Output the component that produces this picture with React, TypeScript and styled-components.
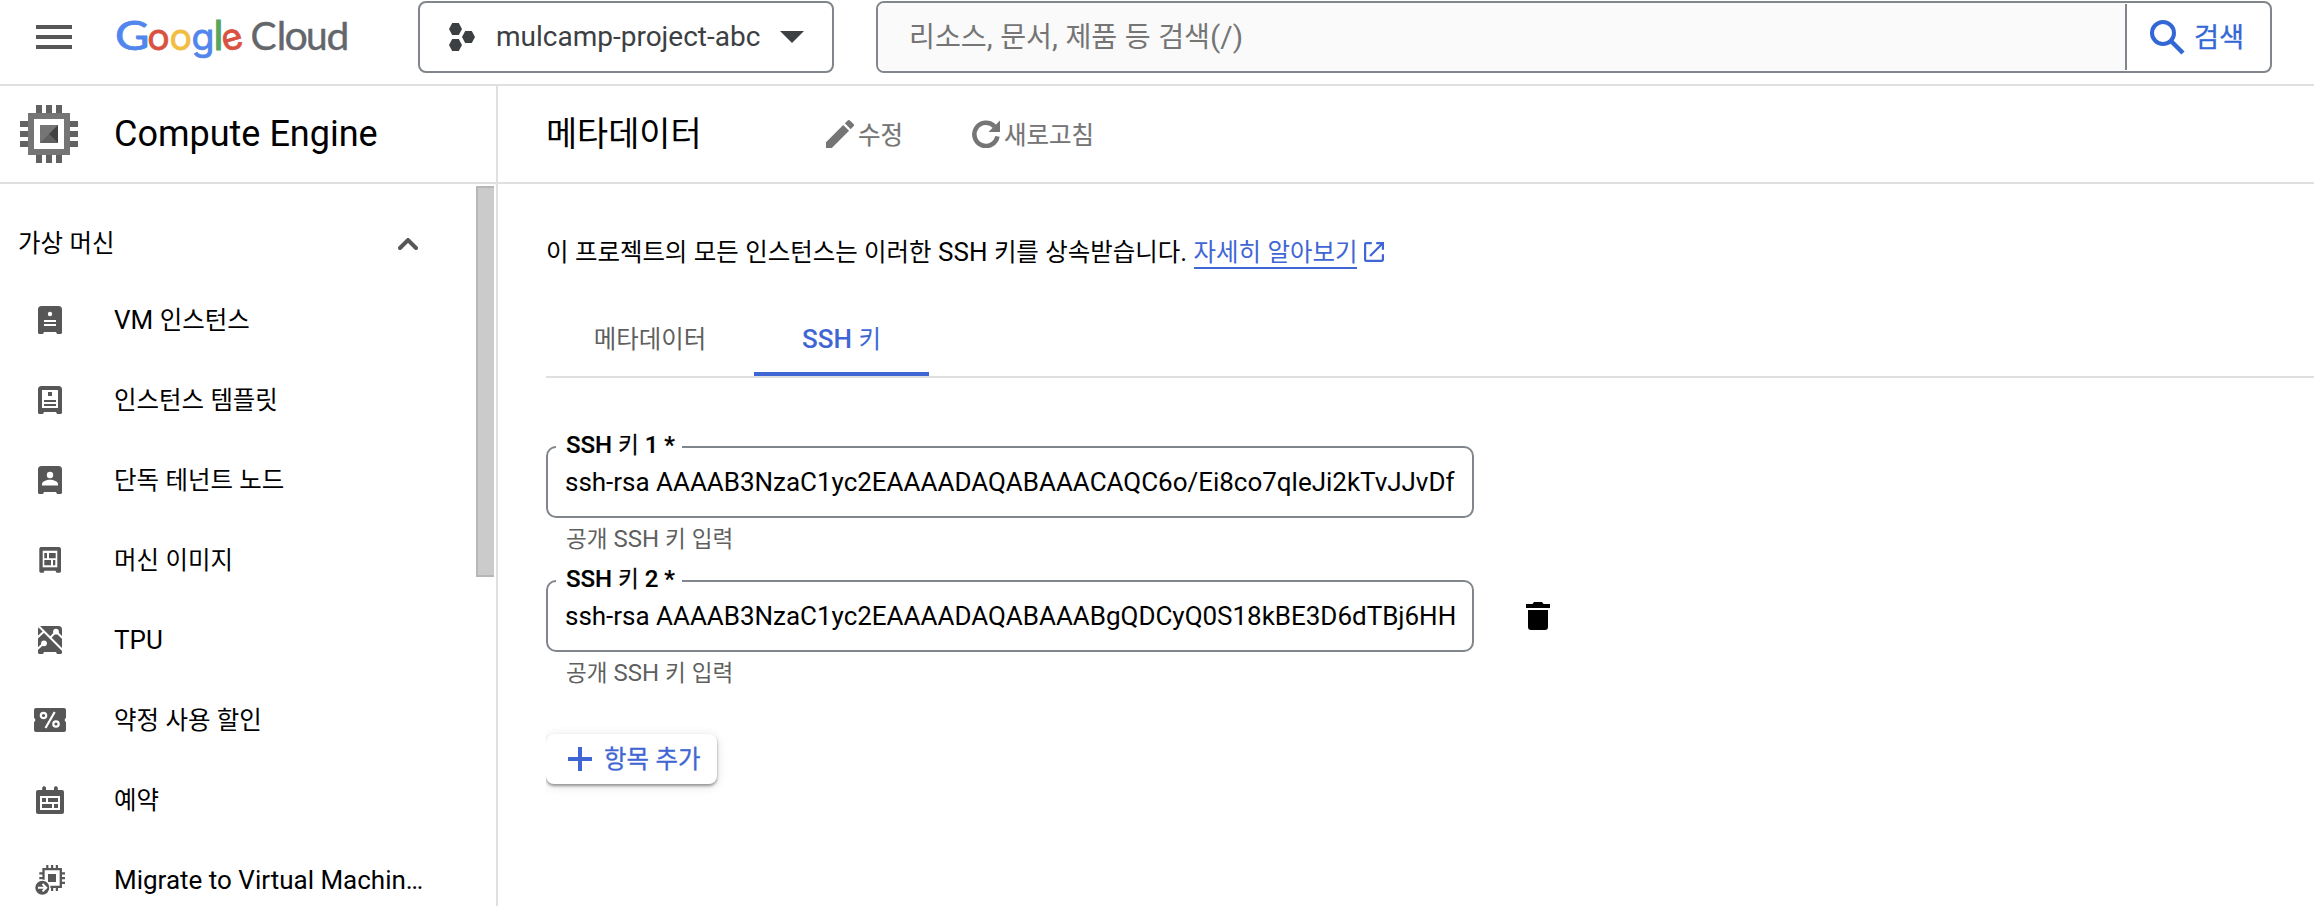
import React from 'react';
import styled, { createGlobalStyle } from 'styled-components';

const GlobalStyle = createGlobalStyle`
  * { box-sizing: border-box; }
  html, body { margin: 0; padding: 0; background: #fff; }
  body {
    font-family: Roboto, 'Noto Sans CJK KR', sans-serif;
    font-size: 26px;
    color: #000;
    overflow: hidden;
  }
  svg { display: block; flex: none; }
`;

/* Hangul is set slightly smaller than Latin so both scripts look even. */
const Hangul = styled.span`
  font-size: 0.94em;
  font-weight: 400;
`;

const Mixed = ({ children }: { children: string }) => (
  <>
    {children.split(/([\uac00-\ud7a3]+)/).map((part, i) =>
      i % 2 ? <Hangul key={i}>{part}</Hangul> : part,
    )}
  </>
);

const Page = styled.div`
  width: 2314px;
  height: 906px;
  display: flex;
  flex-direction: column;
  overflow: hidden;
`;

const TopBar = styled.header`
  height: 86px;
  flex: none;
  display: flex;
  align-items: flex-start;
  padding: 1px 42px 0 36px;
  border-bottom: 2px solid #e0e0e0;
`;

const MenuButton = styled.div`
  height: 72px;
  width: 36px;
  display: flex;
  align-items: center;
`;

const LogoBox = styled.div`
  margin-left: 40px;
  width: 240px;
  height: 72px;
`;

const ProjectPicker = styled.div`
  margin-left: 66px;
  width: 416px;
  height: 72px;
  display: flex;
  align-items: center;
  border: 2px solid #80868b;
  border-radius: 8px;
  padding: 0 28px 0 29px;
  color: #3c4043;
  font-size: 28px;
  line-height: 40px;
`;

const ProjectName = styled.span`
  margin-left: 21px;
  flex: 1;
  white-space: nowrap;
`;

const SearchBox = styled.div`
  margin-left: 42px;
  flex: 1;
  height: 72px;
  display: flex;
  align-items: center;
  border: 2px solid #80868b;
  border-radius: 8px;
  font-size: 30px;
  line-height: 40px;
  overflow: hidden;
`;

const SearchInput = styled.div`
  flex: 1;
  height: 68px;
  display: flex;
  align-items: center;
  white-space: pre;
  background: #fafafa;
  padding-left: 31px;
  color: #757575;
`;

const SearchButton = styled.div`
  width: 145px;
  height: 66px;
  display: flex;
  align-items: center;
  border-left: 2px solid #80868b;
  padding-left: 22px;
  gap: 9px;
  color: #3367d6;
  font-size: 29px;
  -webkit-text-stroke: 0.3px;
`;

const Body = styled.div`
  flex: 1;
  display: flex;
  min-height: 0;
`;

const Sidebar = styled.nav`
  width: 498px;
  flex: none;
  display: flex;
  flex-direction: column;
  border-right: 2px solid #e0e0e0;
`;

const ProductHeader = styled.div`
  height: 98px;
  flex: none;
  display: flex;
  align-items: center;
  gap: 36px;
  padding-left: 20px;
  border-bottom: 2px solid #e0e0e0;
  font-size: 36px;
  line-height: 44px;
`;

const NavScroller = styled.div`
  flex: 1;
  display: flex;
  justify-content: space-between;
  overflow: hidden;
`;

const NavList = styled.div`
  width: 440px;
  padding-top: 18px;
`;

const ScrollThumb = styled.div`
  width: 18px;
  height: 391px;
  margin: 2px 2px 0 0;
  background: #cbcbcb;
  border: solid #b7b7b7;
  border-width: 2px 0 2px 2px;
`;

const NavSection = styled.div`
  height: 78px;
  display: flex;
  align-items: center;
  justify-content: space-between;
  padding: 5px 22px 0 18px;
  line-height: 36px;
`;

const NavItem = styled.div`
  height: 80px;
  display: flex;
  align-items: center;
  gap: 46px;
  padding-left: 32px;
  line-height: 36px;
  white-space: nowrap;
`;

const Main = styled.main`
  flex: 1;
  min-width: 0;
`;

const PageHeader = styled.div`
  height: 98px;
  display: flex;
  align-items: center;
  padding-left: 48px;
  border-bottom: 2px solid #e0e0e0;
`;

const PageTitle = styled.h1`
  margin: 0;
  width: 280px;
  font-size: 36px;
  font-weight: 400;
  line-height: 48px;
`;

const Action = styled.div<{ $gap: number }>`
  display: flex;
  align-items: center;
  gap: 4px;
  margin-right: ${(p) => p.$gap}px;
  color: #757575;
  line-height: 36px;
  -webkit-text-stroke: 0.2px;
`;

const ActionText = styled.span`
  padding-top: 2px;
`;

const Content = styled.div`
  padding: 48px 0 0 48px;
`;

const Intro = styled.p`
  margin: 0;
  height: 40px;
  display: flex;
  line-height: 40px;
  white-space: pre;
`;

const LearnMore = styled.a`
  height: 37px;
  color: #3f66d4;
  border-bottom: 2px solid #3f66d4;
  margin-right: 7px;
`;

const Tabs = styled.div`
  height: 88px;
  margin-top: 18px;
  padding-top: 26px;
  display: flex;
  border-bottom: 2px solid #e0e0e0;
`;

const Tab = styled.div<{ $active?: boolean; $width: number }>`
  width: ${(p) => p.$width}px;
  display: flex;
  justify-content: center;
  line-height: 46px;
  color: ${(p) => (p.$active ? '#3f66d4' : '#5f5f5f')};
  font-weight: 500;
  border-bottom: 4px solid ${(p) => (p.$active ? '#3f66d4' : 'transparent')};
`;

const KeyList = styled.div`
  padding-top: 68px;
`;

const KeyRow = styled.div`
  height: 134px;
  display: flex;
`;

const KeyField = styled.div`
  width: 928px;
`;

const FieldBox = styled.div`
  position: relative;
  height: 72px;
  border: 2px solid #80868b;
  border-radius: 10px;
  padding: 16px 16px 0 17px;
  line-height: 36px;
  letter-spacing: -0.02px;
  white-space: nowrap;
`;

const FieldLabel = styled.span`
  position: absolute;
  left: 8px;
  top: -21px;
  padding: 0 7px 0 10px;
  background: #fff;
  font-size: 24px;
  font-weight: 500;
  line-height: 36px;
  -webkit-text-stroke: 0.2px;
`;

const Hint = styled.div`
  padding-left: 20px;
  margin-top: 3px;
  font-size: 24px;
  line-height: 36px;
  color: #5f5f5f;
`;

const DeleteButton = styled.div`
  margin: 22px 0 0 52px;
`;

const AddButton = styled.div`
  margin-top: 20px;
  width: 171px;
  height: 50px;
  display: flex;
  align-items: center;
  gap: 12px;
  padding-left: 22px;
  border-radius: 8px;
  line-height: 36px;
  color: #3f66d4;
  background: #fff;
  box-shadow: 0 2px 3px rgba(0, 0, 0, 0.38), 0 2px 12px rgba(0, 0, 0, 0.12);
  clip-path: inset(-16px -20px -20px 0);
  white-space: nowrap;
  -webkit-text-stroke: 0.3px;
`;

const INK = '#575757';

const Letter = ({ ch, x, sx = 1, size = 40, fill, weight, font = 'Lato', tilt = 0 }: {
  ch: string; x: number; sx?: number; size?: number; fill: string; weight: number; font?: string; tilt?: number;
}) => (
  <text
    transform={`translate(${x} 48.600) scale(${sx} 1) rotate(${tilt} 10.500 -10)`}
    fontFamily={`${font}, sans-serif`}
    fontSize={size}
    fill={fill}
    stroke={fill}
    strokeWidth={weight}
  >
    {ch}
  </text>
);

const Logo = () => (
  <svg width="240" height="72" viewBox="0 0 240 72">
    <Letter ch="G" x={3} sx={1.15} size={41} fill="#5186ec" weight={0.8} />
    <Letter ch="o" x={35.200} sx={1.040} size={36} font="Inter" fill="#d95140" weight={0.8} />
    <Letter ch="o" x={57.400} sx={1.040} size={36} font="Inter" fill="#f2bd42" weight={0.8} />
    <Letter ch="g" x={79.600} sx={1.040} size={36} font="Inter" fill="#5186ec" weight={0.8} />
    <Letter ch="l" x={101.8} fill="#58a55c" weight={1.2} />
    <Letter ch="e" x={109.500} size={36} font="Inter" tilt={-16} fill="#d95140" weight={0.8} />
    <Letter ch="C" x={138.5} size={39} fill="#63666a" weight={0.4} />
    <Letter ch="l" x={165} size={38} fill="#63666a" weight={0.6} />
    <Letter ch="o" x={172.5} sx={1.030} fill="#63666a" weight={0.4} />
    <Letter ch="u" x={194} sx={0.97} fill="#63666a" weight={0.4} />
    <Letter ch="d" x={214.500} sx={1.060} size={38.5} fill="#63666a" weight={0.4} />
  </svg>
);

const MenuIcon = () => (
  <svg width="36" height="24" viewBox="0 0 36 24" fill={INK}>
    <path d="M0 0h36v4H0zM0 10h36v4H0zM0 20h36v4H0z" />
  </svg>
);

const ProjectIcon = () => (
  <svg width="26" height="28" viewBox="0 0 26 28" fill="#3c4043">
    <path d="M3.2 0h6.6L13 6l-3.200 6H3.200L0 6zM16.200 8h6.600L26 14l-3.200 6h-6.600L13 14zM3.200 16h6.600L13 22l-3.200 6H3.200L0 22z" />
  </svg>
);

const CaretIcon = () => (
  <svg width="24" height="12" viewBox="0 0 24 12" fill="#3c4043">
    <path d="M0 0h24L12 12z" />
  </svg>
);

const SearchIcon = () => (
  <svg width="36" height="36" viewBox="0 0 36 36" fill="none" stroke="#3367d6" strokeWidth="4">
    <circle cx="14" cy="14" r="11" />
    <path d="M21.500 21.500L34 34" strokeWidth="4.500" />
  </svg>
);

const ComputeIcon = () => (
  <svg width="58" height="58" viewBox="0 0 58 58">
    <path
      fill="#626262"
      d="M16 0h6v8h-6zM26 0h6v8h-6zM36 0h6v8h-6zM16 50h6v8h-6zM26 50h6v8h-6zM36 50h6v8h-6zM0 16h8v6H0zM0 26h8v6H0zM0 36h8v6H0zM50 16h8v6h-8zM50 26h8v6h-8zM50 36h8v6h-8z"
    />
    <path fill="#757575" fillRule="evenodd" d="M8 8h42v42H8zM14 14v30h30V14z" />
    <path fill="#757575" d="M20 20h18v18H20z" />
    <path fill="#616161" d="M20 38l9-9 9 9z" />
    <path fill="#424242" d="M38 20v18l-9-9z" />
  </svg>
);

const EditIcon = () => (
  <svg width="28" height="28" viewBox="3 3 18 18" fill="#757575">
    <path d="M3 17.250V21h3.750L17.810 9.940l-3.750-3.750L3 17.250zM20.710 7.040c.39-.39.39-1.020 0-1.410l-2.340-2.340c-.39-.39-1.020-.39-1.410 0l-1.830 1.830 3.750 3.750 1.830-1.830z" />
  </svg>
);

const RefreshIcon = () => (
  <svg width="28" height="28" viewBox="0 0 28 28">
    <path d="M22.500 6.500A11.600 11.600 0 1 0 25.400 16.300" fill="none" stroke="#757575" strokeWidth="4.600" />
    <path d="M28 .5V12H16.500z" fill="#757575" />
  </svg>
);

const ChevronIcon = () => (
  <svg width="20" height="12" viewBox="0 0 20 12" fill="none" stroke={INK} strokeWidth="4" strokeLinecap="round">
    <path d="M2 10l8-8 8 8" />
  </svg>
);

const NavSvg = ({ children }: { children: React.ReactNode }) => (
  <svg width="36" height="36" viewBox="0 0 36 36" fill={INK}>{children}</svg>
);

const CABINET = 'M9.500 4h17A3.500 3.500 0 0 1 30 7.500V31l-1 1h-4l-1-2H12l-1 2H7l-1-1V7.500A3.500 3.500 0 0 1 9.500 4z';

const VmIcon = () => (
  <NavSvg>
    <path d={CABINET} />
    <g fill="#fff">
      <circle cx="18" cy="12" r="2.200" />
      <path d="M12 18h12v2H12zM12 22h12v2H12z" />
    </g>
  </NavSvg>
);

const TemplateIcon = () => (
  <NavSvg>
    <path d={CABINET} />
    <path fill="#fff" d="M10 8h16v18H10z" />
    <path d="M16 10h4v4h-4zM12 18h12v2H12zM12 22h12v2H12z" />
  </NavSvg>
);

const TenantIcon = () => (
  <NavSvg>
    <path d={CABINET} />
    <g fill="#fff">
      <circle cx="18" cy="13" r="3.200" />
      <path d="M10 23.500v-1.500c0-2.500 4.500-4.300 8-4.300s8 1.800 8 4.300v1.500z" />
    </g>
  </NavSvg>
);

const ImageIcon = () => (
  <NavSvg>
    <path d="M8.500 5h19l1.500 1.500v23l-1 1.200h-3.500l-1-2h-11l-1 2H8.300L7.300 29.500v-23z" />
    <path fill="#fff" d="M10.700 8.700h14.600v16.600H10.700z" />
    <path d="M12.300 11H15v5.200h-2.700zM17 11h6.700v5.200H17zM12.300 18H19v5.300h-6.700zM21 18h2.300v5.300H21z" />
  </NavSvg>
);

const TpuIcon = () => (
  <NavSvg>
    <path d={CABINET} />
    <g stroke="#fff" strokeWidth="2" fill="none">
      <path d="M7 4.500L31 28.500M5.500 15.500L12.500 9M31 16.500L24 9.500 18.500 15.500M5.500 27L12 21" />
    </g>
    <g fill="#fff">
      <circle cx="24" cy="9.700" r="2.900" />
      <circle cx="12" cy="21.300" r="2.900" />
    </g>
  </NavSvg>
);

const DiscountIcon = () => (
  <NavSvg>
    <path d="M4 6h28a2 2 0 0 1 2 2v7.500l-1.500 2.500 1.500 2.500V28a2 2 0 0 1-2 2H4a2 2 0 0 1-2-2v-7.500L3.500 18 2 15.500V8a2 2 0 0 1 2-2z" />
    <g fill="none" stroke="#fff" strokeWidth="2.200">
      <circle cx="11.500" cy="13.500" r="2.700" />
      <circle cx="24" cy="22" r="2.700" />
      <path d="M22.700 10L13.500 26" />
    </g>
  </NavSvg>
);

const ReservationIcon = () => (
  <NavSvg>
    <path d="M10.200 8V5.500l1.200-1.300h1.300L14 5.500V8h8V5.500l1.200-1.300h1.300l1.300 1.300V8H30a2 2 0 0 1 2 2v20a2 2 0 0 1-2 2H6a2 2 0 0 1-2-2V10a2 2 0 0 1 2-2z" />
    <path fill="#fff" d="M8 14h20v14H8z" />
    <path d="M10 16h4v4h-4zM16 16h10v4H16zM10 22h10v4H10zM22 22h4v4h-4z" />
  </NavSvg>
);

const MigrateIcon = () => (
  <NavSvg>
    <path d="M14.200 3h2.200v4h-2.200zM19 3h2.200v4H19zM23.800 3H26v4h-2.200zM19 25h2.200v4H19zM23.800 25H26v4h-2.200zM29 10.200h4v2.200h-4zM29 15h4v2.200h-4zM29 19.800h4V22h-4zM7.300 10.200h4v2.200h-4zM7.300 15h4v2.200h-4z" />
    <path d="M11.500 7.200h17.300v17.600H11.500z" fill="#fff" stroke={INK} strokeWidth="2.300" />
    <path d="M16 12h8v8h-8z" />
    <circle cx="10.300" cy="25.700" r="8.200" fill="#fff" />
    <circle cx="10.300" cy="25.700" r="7" />
    <path d="M6 25.700h7.500M10.500 22l3.700 3.700-3.700 3.700" stroke="#fff" strokeWidth="2" fill="none" />
  </NavSvg>
);

const OpenIcon = () => (
  <svg width="20" height="20" viewBox="3 3 18 18" fill="#3f66d4">
    <path d="M19 19H5V5h5V3H5a2 2 0 0 0-2 2v14a2 2 0 0 0 2 2h14c1.100 0 2-.9 2-2v-5h-2v5zM14 3v2h3.590l-9.830 9.830 1.410 1.410L19 6.410V10h2V3h-7z" />
  </svg>
);

const OpenSlot = styled.span`
  padding-top: 10px;
`;

const TrashIcon = () => (
  <svg width="24" height="28" viewBox="0 0 24 28">
    <path d="M2 8h20v17a3 3 0 0 1-3 3H5a3 3 0 0 1-3-3zM0 2h6.500L8 0h8l1.500 2H24v4H0z" />
  </svg>
);

const PlusIcon = () => (
  <svg width="24" height="24" viewBox="0 0 24 24" fill="#3f66d4">
    <path d="M10 0h4v10h10v4H14v10h-4V14H0v-4h10z" />
  </svg>
);

const NAV = [
  { icon: <VmIcon />, label: 'VM 인스턴스' },
  { icon: <TemplateIcon />, label: '인스턴스 템플릿' },
  { icon: <TenantIcon />, label: '단독 테넌트 노드' },
  { icon: <ImageIcon />, label: '머신 이미지' },
  { icon: <TpuIcon />, label: 'TPU' },
  { icon: <DiscountIcon />, label: '약정 사용 할인' },
  { icon: <ReservationIcon />, label: '예약' },
  { icon: <MigrateIcon />, label: 'Migrate to Virtual Machin…' },
];

const KEYS = [
  { value: 'ssh-rsa AAAAB3NzaC1yc2EAAAADAQABAAACAQC6o/Ei8co7qleJi2kTvJJvDf', removable: false },
  { value: 'ssh-rsa AAAAB3NzaC1yc2EAAAADAQABAAABgQDCyQ0S18kBE3D6dTBj6HH', removable: true },
];

export default function App() {
  return (
    <Page>
      <GlobalStyle />
      <TopBar>
        <MenuButton><MenuIcon /></MenuButton>
        <LogoBox><Logo /></LogoBox>
        <ProjectPicker>
          <ProjectIcon />
          <ProjectName>mulcamp-project-abc</ProjectName>
          <CaretIcon />
        </ProjectPicker>
        <SearchBox>
          <SearchInput>
            <span><Mixed>리소스, 문서, 제품 등 검색(/)</Mixed></span>
          </SearchInput>
          <SearchButton>
            <SearchIcon />
            <span><Mixed>검색</Mixed></span>
          </SearchButton>
        </SearchBox>
      </TopBar>
      <Body>
        <Sidebar>
          <ProductHeader>
            <ComputeIcon />
            <span>Compute Engine</span>
          </ProductHeader>
          <NavScroller>
            <NavList>
              <NavSection>
                <span><Mixed>가상 머신</Mixed></span>
                <ChevronIcon />
              </NavSection>
              {NAV.map((item) => (
                <NavItem key={item.label}>
                  {item.icon}
                  <span><Mixed>{item.label}</Mixed></span>
                </NavItem>
              ))}
            </NavList>
            <ScrollThumb />
          </NavScroller>
        </Sidebar>
        <Main>
          <PageHeader>
            <PageTitle><Mixed>메타데이터</Mixed></PageTitle>
            <Action $gap={69}><EditIcon /><ActionText><Mixed>수정</Mixed></ActionText></Action>
            <Action $gap={0}><RefreshIcon /><ActionText><Mixed>새로고침</Mixed></ActionText></Action>
          </PageHeader>
          <Content>
            <Intro>
              <span><Mixed>이 프로젝트의 모든 인스턴스는 이러한 SSH 키를 상속받습니다. </Mixed></span>
              <LearnMore><Mixed>자세히 알아보기</Mixed></LearnMore>
              <OpenSlot><OpenIcon /></OpenSlot>
            </Intro>
            <Tabs>
              <Tab $width={208}><span><Mixed>메타데이터</Mixed></span></Tab>
              <Tab $width={175} $active><span><Mixed>SSH 키</Mixed></span></Tab>
            </Tabs>
            <KeyList>
              {KEYS.map((key, i) => (
                <KeyRow key={key.value}>
                  <KeyField>
                    <FieldBox>
                      <FieldLabel><Mixed>{`SSH 키 ${i + 1} *`}</Mixed></FieldLabel>
                      {key.value}
                    </FieldBox>
                    <Hint><Mixed>공개 SSH 키 입력</Mixed></Hint>
                  </KeyField>
                  {key.removable && <DeleteButton><TrashIcon /></DeleteButton>}
                </KeyRow>
              ))}
            </KeyList>
            <AddButton><PlusIcon /><span><Mixed>항목 추가</Mixed></span></AddButton>
          </Content>
        </Main>
      </Body>
    </Page>
  );
}
